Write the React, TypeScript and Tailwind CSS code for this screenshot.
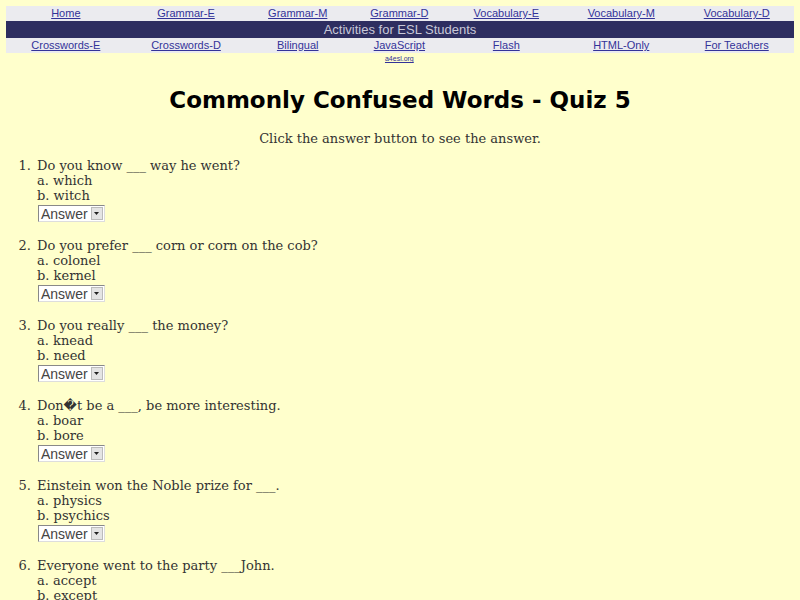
import React from 'react';

const topLinks = ['Home', 'Grammar-E', 'Grammar-M', 'Grammar-D', 'Vocabulary-E', 'Vocabulary-M', 'Vocabulary-D'];
const bottomLinks = ['Crosswords-E', 'Crosswords-D', 'Bilingual', 'JavaScript', 'Flash', 'HTML-Only', 'For Teachers'];

const questions = [
  { q: 'Do you know ___ way he went?', a: 'which', b: 'witch' },
  { q: 'Do you prefer ___ corn or corn on the cob?', a: 'colonel', b: 'kernel' },
  { q: 'Do you really ___ the money?', a: 'knead', b: 'need' },
  { q: 'Don\uFFFDt be a ___, be more interesting.', a: 'boar', b: 'bore' },
  { q: 'Einstein won the Noble prize for ___.', a: 'physics', b: 'psychics' },
  { q: 'Everyone went to the party ___John.', a: 'accept', b: 'except' },
];

function AnswerBox() {
  return (
    <span className="inline-flex items-center h-[17px] border border-[#888] border-r-[#ddd] border-b-[#ddd] bg-white pl-[2px] pr-[1px] text-[14px] leading-none text-[#444] font-['Liberation_Sans',sans-serif]">
      Answer
      <span className="ml-[3px] flex items-center justify-center w-[12px] h-[13px] bg-[#e4e4e4] border border-[#bbb]">
        <svg width="5" height="3" viewBox="0 0 5 3"><path d="M0 0h5L2.5 3z" fill="#222" /></svg>
      </span>
    </span>
  );
}

export default function App() {
  return (
    <div className="h-[600px] overflow-hidden bg-[#ffffcc] pt-[6px] px-[6px] font-['DejaVu_Serif',serif] text-[#333]">
      <table className="w-full border-collapse text-[11px] font-['Liberation_Sans',Arial,sans-serif]">
        <tbody>
          <tr className="bg-[#ebebef] h-[15px]">
            {topLinks.map((l) => (
              <td key={l} className="text-center leading-[15px] p-0">
                <a href="#" className="text-[#333399] underline">{l}</a>
              </td>
            ))}
          </tr>
          <tr className="bg-[#2e2e60] h-[17px]">
            <td colSpan={7} className="text-center text-[#c8c8d8] text-[13px] leading-[17px] p-0">
              Activities for ESL Students
            </td>
          </tr>
          <tr className="bg-[#ebebef] h-[15px]">
            {bottomLinks.map((l) => (
              <td key={l} className="text-center leading-[15px] p-0">
                <a href="#" className="text-[#333399] underline">{l}</a>
              </td>
            ))}
          </tr>
          <tr>
            <td colSpan={3} />
            <td className="text-center leading-[9px] p-0">
              <a href="#" className="text-[#333399] underline text-[7px]">a4esl.org</a>
            </td>
            <td colSpan={3} />
          </tr>
        </tbody>
      </table>

      <h1 className="mt-[22px] text-center text-[23px] font-bold text-black leading-[30px] font-['DejaVu_Sans',sans-serif]">
        Commonly Confused Words - Quiz 5
      </h1>

      <p className="mt-[16px] text-center text-[13px] leading-[16px]">Click the answer button to see the answer.</p>

      <ol className="mt-[11px] text-[13px] leading-[15px]">
        {questions.map((item, i) => (
          <li key={i} className="flex mb-[16px]">
            <span className="w-[31px] text-right pr-[6px]">{i + 1}.</span>
            <div>
              <div>{item.q}</div>
              <div>a. {item.a}</div>
              <div>b. {item.b}</div>
              <div className="mt-[2px] ml-[1px]"><AnswerBox /></div>
            </div>
          </li>
        ))}
      </ol>
    </div>
  );
}
